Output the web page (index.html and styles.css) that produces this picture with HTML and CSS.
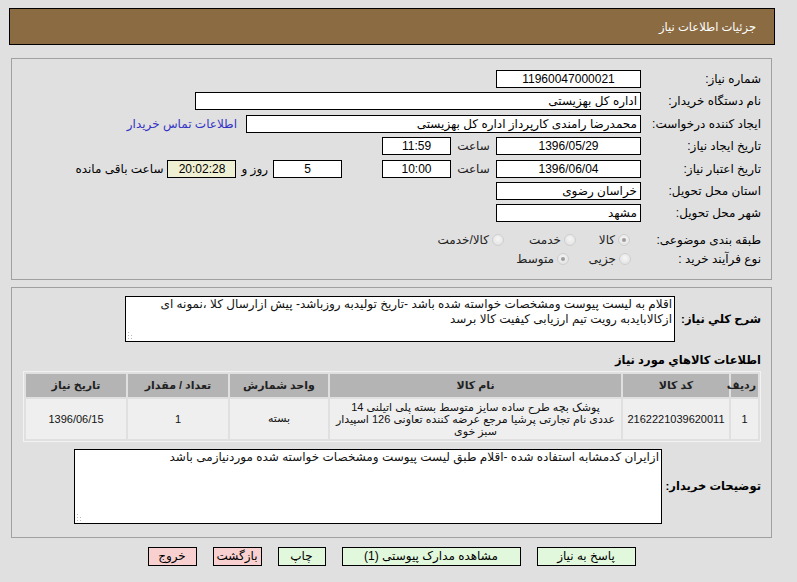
FILE: index.html
```html
<!DOCTYPE html>
<html lang="fa" dir="rtl">
<head>
<meta charset="utf-8">
<title>جزئیات اطلاعات نیاز</title>
<link rel="stylesheet" href="styles.css">
</head>
<body>
<div class="page">
  <div class="header">جزئیات اطلاعات نیاز</div>

  <div class="panel panel-form">
    <div class="row">
      <div class="label">شماره نیاز:</div>
      <div class="field w145 center">11960047000021</div>
    </div>
    <div class="row">
      <div class="label">نام دستگاه خریدار:</div>
      <div class="field w446">اداره کل بهزیستی</div>
    </div>
    <div class="row">
      <div class="label">ایجاد کننده درخواست:</div>
      <div class="field w395">محمدرضا رامندی کارپرداز اداره کل بهزیستی</div>
      <a class="link" href="#">اطلاعات تماس خریدار</a>
    </div>
    <div class="row">
      <div class="label">تاریخ ایجاد نیاز:</div>
      <div class="field w145 center">1396/05/29</div>
      <div class="unit">ساعت</div>
      <div class="field w69 center">11:59</div>
    </div>
    <div class="row">
      <div class="label">تاریخ اعتبار نیاز:</div>
      <div class="field w145 center">1396/06/04</div>
      <div class="unit">ساعت</div>
      <div class="field w69 center">10:00</div>
      <div class="field w69 center days">5</div>
      <div class="text-days">روز و</div>
      <div class="field w69 center remain">20:02:28</div>
      <div class="text-remain">ساعت باقی مانده</div>
    </div>
    <div class="row">
      <div class="label">استان محل تحویل:</div>
      <div class="field w145">خراسان رضوی</div>
    </div>
    <div class="row">
      <div class="label">شهر محل تحویل:</div>
      <div class="field w145">مشهد</div>
    </div>
    <div class="radio-row first">
      <div class="label">طبقه بندی موضوعی:</div>
      <div class="options opt-a">
        <div class="option o54"><span class="radio checked"></span><span>کالا</span></div>
        <div class="option o72"><span class="radio"></span><span>خدمت</span></div>
        <div class="option"><span class="radio"></span><span>کالا/خدمت</span></div>
      </div>
    </div>
    <div class="radio-row">
      <div class="label">نوع فرآیند خرید :</div>
      <div class="options opt-b">
        <div class="option o62"><span class="radio"></span><span>جزیی</span></div>
        <div class="option"><span class="radio checked"></span><span>متوسط</span></div>
      </div>
    </div>
  </div>

  <div class="panel panel-details">
    <div class="desc-row">
      <div class="desc-label l1">شرح کلي نياز:</div>
      <div class="area area1">اقلام به لیست پیوست ومشخصات خواسته شده باشد -تاریخ تولیدبه روزباشد- پیش ازارسال کلا ،نمونه ای ازکالابایدبه رویت تیم ارزیابی کیفیت کالا برسد<span class="grip"><svg width="6" height="7" viewBox="0 0 6 7"><g fill="#b8b8b8"><rect x="0" y="0" width="1" height="1"/><rect x="0" y="3" width="1" height="1"/><rect x="3" y="3" width="1" height="1"/><rect x="0" y="6" width="1" height="1"/><rect x="3" y="6" width="1" height="1"/></g></svg></span></div>
    </div>

    <div class="heading">اطلاعات کالاهاي مورد نياز</div>

    <table class="items">
      <thead>
        <tr>
          <th class="c-row">ردیف</th>
          <th class="c-code">کد کالا</th>
          <th class="c-name">نام کالا</th>
          <th class="c-unit">واحد شمارش</th>
          <th class="c-qty">تعداد / مقدار</th>
          <th class="c-date">تاریخ نیاز</th>
        </tr>
      </thead>
      <tbody>
        <tr>
          <td>1</td>
          <td>2162221039620011</td>
          <td class="name">پوشک بچه طرح ساده سایز متوسط بسته پلی اتیلنی 14<br>عددی نام تجارتی پرشیا مرجع عرضه کننده تعاونی 126 اسپیدار<br>سبز خوی</td>
          <td>بسته</td>
          <td>1</td>
          <td>1396/06/15</td>
        </tr>
      </tbody>
    </table>

    <div class="desc-row buyer">
      <div class="desc-label l2">توضیحات خریدار:</div>
      <div class="area area2">ازایران کدمشابه استفاده شده -اقلام طبق لیست پیوست ومشخصات خواسته شده موردنیازمی باشد<span class="grip"><svg width="6" height="7" viewBox="0 0 6 7"><g fill="#b8b8b8"><rect x="0" y="0" width="1" height="1"/><rect x="0" y="3" width="1" height="1"/><rect x="3" y="3" width="1" height="1"/><rect x="0" y="6" width="1" height="1"/><rect x="3" y="6" width="1" height="1"/></g></svg></span></div>
    </div>
  </div>

  <div class="buttons">
    <div class="btn green b99">پاسخ به نیاز</div>
    <div class="btn green b179">مشاهده مدارک پیوستی (1)</div>
    <div class="btn green b48">چاپ</div>
    <div class="btn pink b49">بازگشت</div>
    <div class="btn pink b49">خروج</div>
  </div>
</div>
</body>
</html>
```

FILE: styles.css
```css
* { box-sizing: border-box; }

body {
  margin: 0;
  background: #e0e0e0;
  font-family: "Liberation Sans", "DejaVu Sans", sans-serif;
  font-size: 12px;
  color: #000;
  direction: rtl;
}

.page {
  padding-top: 8px;
  padding-right: 22px;
  padding-left: 9px;
}

.header {
  height: 37px;
  background: #8b6b42;
  border: 1px solid #000;
  color: #fff;
  display: flex;
  align-items: center;
  padding-right: 18px;
  font-size: 11.5px;
}

.panel {
  border: 1px solid #a0a0a0;
  margin-right: 3px;
  margin-left: 2px;
}

.panel-form {
  margin-top: 13px;
  padding: 11px 10px 10px 10px;
}

.row {
  display: flex;
  align-items: center;
  height: 18px;
  margin-bottom: 4.4px;
}

.label {
  width: 120px;
  flex: none;
  white-space: nowrap;
}

.field {
  flex: none;
  height: 18px;
  border: 1px solid #000;
  background: #fff;
  line-height: 16px;
  padding: 0 3px;
  white-space: nowrap;
  overflow: hidden;
}

.center { text-align: center; }
.w145 { width: 145px; }
.w446 { width: 446px; }
.w395 { width: 395px; }
.w69 { width: 69px; }

.link {
  color: #3434c4;
  text-decoration: none;
  margin-right: 9px;
  white-space: nowrap;
}

.unit {
  width: 45px;
  flex: none;
  text-align: center;
  color: #222;
}

.days { margin-right: 40px; }
.text-days { margin: 0 5px; white-space: nowrap; }
.remain { background: #efefd4; }
.text-remain { margin-right: 4px; white-space: nowrap; }

.radio-row {
  display: flex;
  align-items: center;
  height: 19px;
}
.radio-row.first { margin-top: 8.2px; }

.options { display: flex; align-items: center; }
.opt-a { padding-right: 11px; }
.opt-b { padding-right: 10px; }

.option {
  display: flex;
  align-items: center;
  flex: none;
  color: #222;
}
.o54 { width: 54px; }
.o72 { width: 72px; }
.o62 { width: 62px; }

.radio {
  position: relative;
  width: 12px;
  height: 12px;
  border-radius: 50%;
  border: 1px solid #cfcfcf;
  background: radial-gradient(circle at 50% 40%, #f6f6f6, #dedede);
  margin-left: 3px;
  flex: none;
}
.radio.checked::after {
  content: "";
  position: absolute;
  left: 3px;
  top: 3px;
  width: 4px;
  height: 4px;
  border-radius: 50%;
  background: #9c9c9c;
}

.panel-details {
  margin-top: 7px;
  padding: 8px 10px 13px 10px;
}

.desc-row {
  display: flex;
  align-items: center;
}

.desc-label {
  flex: none;
  font-weight: bold;
  white-space: nowrap;
  font-size: 11.5px;
}
.l1 { width: 86px; }
.l2 { width: 99px; }

.area {
  position: relative;
  background: #fff;
  border: 1px solid #000;
  padding: 0 2px;
  line-height: 15px;
  color: #111;
}
.area1 { width: 550px; height: 46px; }
.area2 { width: 588px; height: 75px; }

.grip {
  position: absolute;
  left: 2px;
  bottom: 2px;
  line-height: 0;
}

.heading {
  margin-top: 10px;
  height: 16px;
  line-height: 16px;
  font-weight: bold;
  font-size: 11.5px;
}

.items {
  margin-top: 3px;
  width: 738px;
  border-collapse: separate;
  border-spacing: 2px;
  border: 1px solid #f2f2f2;
  table-layout: fixed;
  font-size: 11px;
}

.items th {
  background: #b4b4b4;
  height: 23px;
  font-weight: bold;
  color: #222;
  padding: 0 2px;
}

.items td {
  background: #efefef;
  height: 40px;
  text-align: center;
  padding: 0 2px;
  color: #111;
}

.items td.name {
  line-height: 12px;
  white-space: nowrap;
}

.c-row { width: 27px; }
.c-code { width: 106px; }
.c-name { width: 291px; }
.c-unit { width: 98px; }
.c-qty { width: 100px; }
.c-date { width: 100px; }

.buyer { margin-top: 7px; }

.buttons {
  display: flex;
  justify-content: center;
  gap: 16px;
  margin: 9px 3px 0 2px;
}

.btn {
  height: 19px;
  border: 1px solid #000;
  line-height: 17px;
  text-align: center;
  white-space: nowrap;
}
.green { background: #e2f8dc; }
.pink { background: #f8d0d0; }
.b99 { width: 99px; }
.b179 { width: 179px; }
.b48 { width: 48px; }
.b49 { width: 49px; }
```
